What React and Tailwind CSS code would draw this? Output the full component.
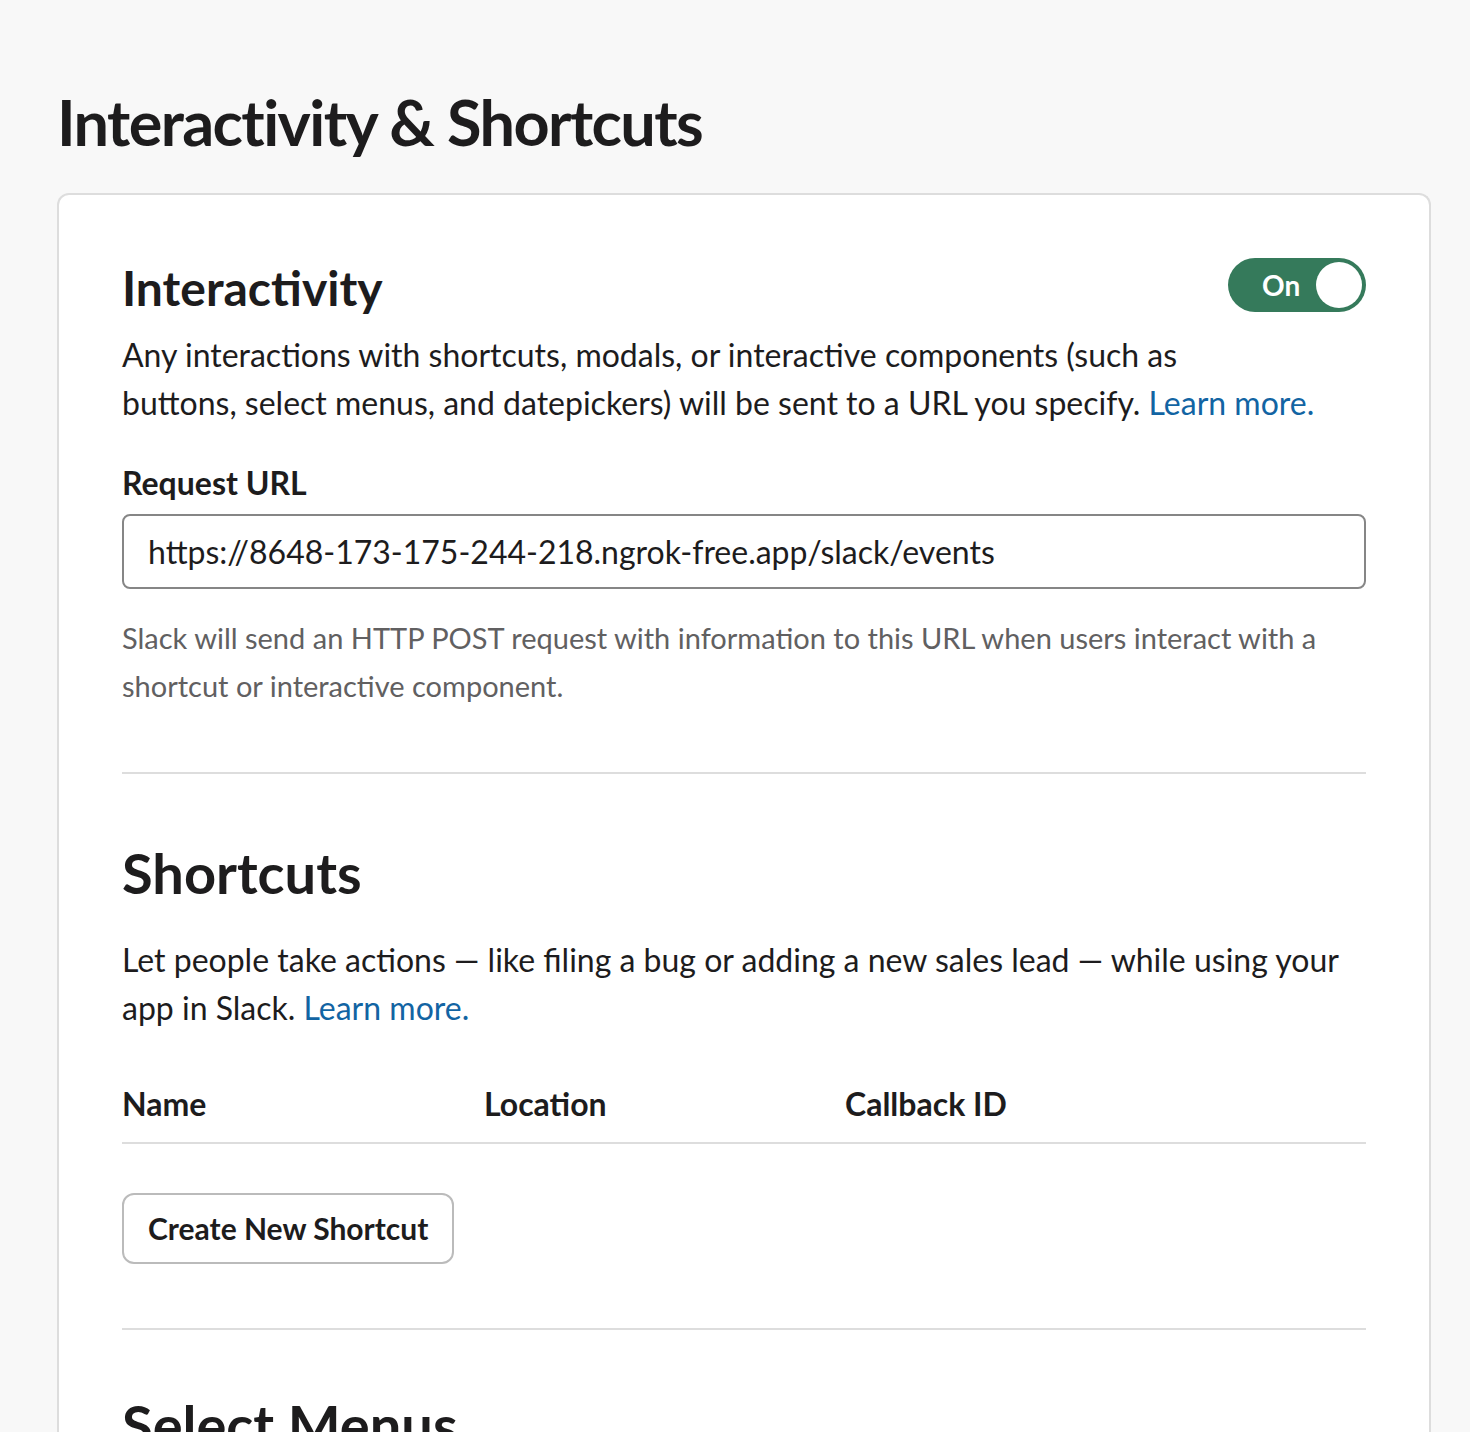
import React from 'react'

function Toggle() {
  return (
    <button className="flex h-[54px] w-[138px] shrink-0 items-center justify-between rounded-full bg-[#357a5b] pl-[34px] pr-[4px]">
      <span className="text-[28px] font-bold leading-none text-white">On</span>
      <span className="h-[46px] w-[46px] rounded-full bg-white" />
    </button>
  )
}

export default function App() {
  return (
    <div
      className="min-h-[1432px] bg-[#f8f8f8] pl-[57px] pr-[39px] pt-[82px] text-[#1d1c1d]"
      style={{ fontFamily: 'Lato, "Noto Sans", sans-serif' }}
    >
      <h1 className="text-[63px] font-bold leading-[80px] tracking-[-1.6px]">Interactivity &amp; Shortcuts</h1>

      <div className="mt-[31px] rounded-t-[12px] border-2 border-b-0 border-[#dddddd] bg-white px-[63px] pt-[63px] pb-[200px]">
        {/* Interactivity */}
        <section>
          <div className="flex items-start justify-between">
            <h2 className="text-[48px] font-bold leading-[60px]">Interactivity</h2>
            <Toggle />
          </div>
          <p className="mt-[13px] text-[32px] leading-[48px]">
            Any interactions with shortcuts, modals, or interactive components (such as
            <br />
            buttons, select menus, and datepickers) will be sent to a URL you specify.{' '}
            <a className="text-[#1264a3]">Learn more.</a>
          </p>

          <label className="mt-[32px] block text-[32px] font-bold leading-[48px]">Request URL</label>
          <div className="mt-[7px] flex h-[75px] items-center rounded-[8px] border-2 border-[#868686] px-[24px] text-[32px]">
            https://8648-173-175-244-218.ngrok-free.app/slack/events
          </div>
          <p className="mt-[25px] text-[29px] leading-[48px] text-[#616061]">
            Slack will send an HTTP POST request with information to this URL when users interact with a shortcut or
            interactive component.
          </p>
        </section>

        <div className="mt-[62px] h-[2px] bg-[#dddddd]" />

        {/* Shortcuts */}
        <section className="pt-[63px]">
          <h2 className="text-[56px] font-bold leading-[72px]">Shortcuts</h2>
          <p className="mt-[27px] text-[32px] leading-[48px]">
            Let people take actions — like filing a bug or adding a new sales lead — while using your app in Slack.{' '}
            <a className="text-[#1264a3]">Learn more.</a>
          </p>

          <div className="mt-[48px] grid grid-cols-[362px_361px_1fr] border-b-2 border-[#dddddd] pb-[14px] text-[32px] font-bold leading-[48px]">
            <div>Name</div>
            <div>Location</div>
            <div>Callback ID</div>
          </div>

          <button className="mt-[49px] h-[71px] rounded-[12px] border-2 border-[#bbbbbb] px-[24px] text-[30px] font-bold">
            Create New Shortcut
          </button>
        </section>

        <div className="mt-[64px] h-[2px] bg-[#dddddd]" />

        {/* Select Menus */}
        <section className="pt-[59px]">
          <h2 className="text-[56px] font-bold leading-[72px]">Select Menus</h2>
        </section>
      </div>
    </div>
  )
}
